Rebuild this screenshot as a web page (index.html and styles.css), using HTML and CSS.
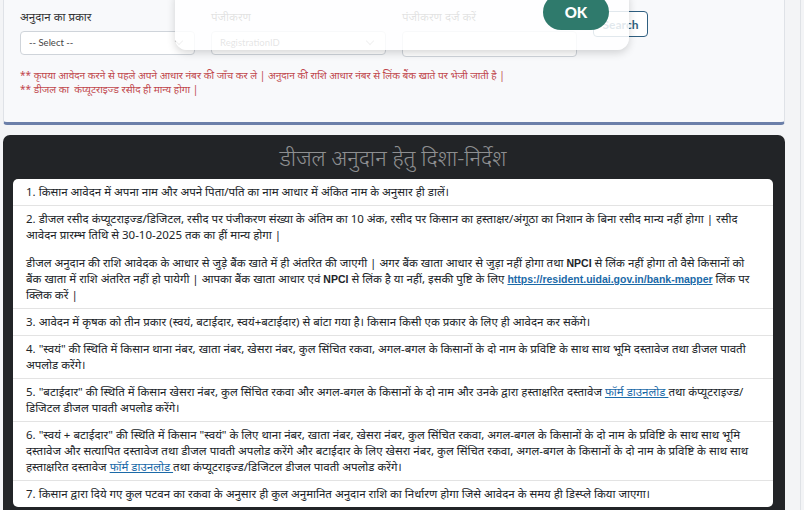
FILE: index.html
```html
<!DOCTYPE html>
<html>

<head>
    <meta charset="utf-8">
    <link rel="stylesheet" href="styles.css">
</head>

<body>
    <div class="page">
        <div class="search-card">
            <div class="form-row">
                <div class="field">
                    <label>अनुदान का प्रकार</label>
                    <div class="select-box">-- Select --<span class="chevron"></span></div>
                </div>
                <div class="field">
                    <label>पंजीकरण</label>
                    <div class="select-box">RegistrationID<span class="chevron"></span></div>
                </div>
                <div class="field">
                    <label>पंजीकरण दर्ज करें</label>
                    <div class="text-box"></div>
                </div>
                <button class="search-button">Search</button>
            </div>
            <div class="notes">
                <p>** कृपया आवेदन करने से पहले अपने आधार नंबर की जाँच कर ले | अनुदान की राशि आधार नंबर से लिंक बैंक खाते पर भेजी जाती है |</p>
                <p>** डीजल का &nbsp;कंप्यूटराइज्ड रसीद ही मान्य होगा |</p>
            </div>
            <!-- alert popup closing over the form -->
            <div class="alert-box">
                <button class="ok-button">OK</button>
            </div>
        </div>

        <div class="guide-panel">
            <h2>डीजल अनुदान हेतु दिशा-निर्देश</h2>
            <ul class="guide-list">
                <li>1. किसान आवेदन में अपना नाम और अपने पिता/पति का नाम आधार में अंकित नाम के अनुसार ही डालें।</li>
                <li>
                    <p>2. डीजल रसीद कंप्यूटराइज्ड/डिजिटल, रसीद पर पंजीकरण संख्या के अंतिम का 10 अंक, रसीद पर किसान का हस्ताक्षर/अंगूठा का निशान के बिना रसीद मान्य नहीं होगा | रसीद आवेदन प्रारम्भ तिथि से 30-10-2025 तक का हीं मान्य होगा |</p>
                    <p>डीजल अनुदान की राशि आवेदक के आधार से जुड़े बैंक खाते में ही अंतरित की जाएगी | अगर बैंक खाता आधार से जुड़ा नहीं होगा तथा <span class="latin">NPCI</span> से लिंक नहीं होगा तो वैसे किसानों को बैंक खाता में राशि अंतरित नहीं हो पायेगी | आपका बैंक खाता आधार एवं <span class="latin">NPCI</span> से लिंक है या नहीं, इसकी पुष्टि के लिए <a href="#" class="bold-link">https://resident.uidai.gov.in/bank-mapper</a> लिंक पर क्लिक करें |</p>
                </li>
                <li>3. आवेदन में कृषक को तीन प्रकार (स्वयं, बटाईदार, स्वयं+बटाईदार) से बांटा गया है। किसान किसी एक प्रकार के लिए ही आवेदन कर सकेंगे।</li>
                <li>4. "स्वयं" की स्थिति में किसान थाना नंबर, खाता नंबर, खेसरा नंबर, कुल सिंचित रकवा, अगल-बगल के किसानों के दो नाम के प्रविष्टि के साथ साथ भूमि दस्तावेज तथा डीजल पावती अपलोड करेंगे।</li>
                <li>5. "बटाईदार" की स्थिति में किसान खेसरा नंबर, कुल सिंचित रकवा और अगल-बगल के किसानों के दो नाम और उनके द्वारा हस्ताक्षरित दस्तावेज <a href="#">फॉर्म डाउनलोड&nbsp;</a>तथा कंप्यूटराइज्ड/डिजिटल डीजल पावती अपलोड करेंगे।</li>
                <li>6. "स्वयं + बटाईदार" की स्थिति में किसान "स्वयं" के लिए थाना नंबर, खाता नंबर, खेसरा नंबर, कुल सिंचित रकवा, अगल-बगल के किसानों के दो नाम के प्रविष्टि के साथ साथ भूमि दस्तावेज और सत्यापित दस्तावेज तथा डीजल पावती अपलोड करेंगे और बटाईदार के लिए खेसरा नंबर, कुल सिंचित रकवा, अगल-बगल के किसानों के दो नाम के प्रविष्टि के साथ साथ हस्ताक्षरित दस्तावेज <a href="#">फॉर्म डाउनलोड&nbsp;</a>तथा कंप्यूटराइज्ड/डिजिटल डीजल पावती अपलोड करेंगे।</li>
                <li>7. किसान द्वारा दिये गए कुल पटवन का रकवा के अनुसार ही कुल अनुमानित अनुदान राशि का निर्धारण होगा जिसे आवेदन के समय ही डिस्प्ले किया जाएगा।</li>
            </ul>
        </div>
    </div>
</body>
</html>
```

FILE: styles.css
```css
body {
    font-family: "Noto Sans", "Noto Sans Devanagari", "Lohit Devanagari", sans-serif;
    background-color: #f3f4f6;
    margin: 0;
    padding: 0;
    overflow: hidden;
}

.page {
    width: 797px;
    padding-left: 3px;
    border-right: 1px solid #dfe2e6;
    height: 510px;
}

.search-card {
    position: relative;
    width: 782px;
    background-color: #f8f9fb;
    border: 1px solid #dfe2e7;
    border-top: none;
    border-bottom: 3px solid #6b7fa9;
    border-radius: 0 0 4px 4px;
    height: 125px;
    box-sizing: border-box;
    padding: 9px 16px 0 16px;
}

.form-row {
    display: flex;
    align-items: flex-start;
    gap: 16px;
}

.field {
    width: 175px;
}

.field label {
    display: block;
    font-size: 11.5px;
    color: #333;
    height: 22px;
    line-height: 16px;
}

.select-box,
.text-box {
    position: relative;
    height: 22px;
    border: 1px solid #cfd4da;
    border-radius: 4px;
    background-color: white;
    font-family: Lato, "Open Sans", sans-serif;
    font-size: 9.5px;
    color: #444;
    line-height: 22px;
    padding-left: 8px;
}

.text-box {
    height: 24px;
}

.chevron {
    position: absolute;
    right: 12px;
    top: 6px;
    width: 5px;
    height: 5px;
    border-right: 1px solid #999;
    border-bottom: 1px solid #999;
    transform: rotate(45deg);
}

.search-button {
    margin-top: 2px;
    width: 55px;
    height: 26px;
    border: 1px solid #2f5f80;
    border-radius: 4px;
    background-color: white;
    color: #2f5f80;
    font-family: Lato, "Open Sans", sans-serif;
    font-weight: bold;
    font-size: 12px;
    padding: 0;
}

.notes {
    margin-top: 11px;
    color: #c0464b;
    font-size: 10.1px;
    line-height: 14px;
}

.notes p {
    margin: 0;
}

.alert-box {
    position: absolute;
    left: 171px;
    top: -12px;
    width: 454px;
    height: 62px;
    border-radius: 12px;
    background-color: rgba(255, 255, 255, 0.86);
    box-shadow: 0 3px 9px rgba(0, 0, 0, 0.16);
}

.ok-button {
    position: absolute;
    left: 368px;
    top: 6px;
    width: 66px;
    height: 36px;
    border: none;
    border-radius: 18px;
    background-color: #2f7a6c;
    color: white;
    font-family: Lato, "Open Sans", sans-serif;
    font-weight: 900;
    font-size: 15px;
}

.guide-panel {
    width: 760px;
    margin-top: 10px;
    background-color: #222427;
    border-radius: 7px 7px 0 0;
    padding: 0 12px 10px 10px;
    height: 400px;
}

.guide-panel h2 {
    margin: 0;
    height: 44px;
    line-height: 44px;
    text-align: center;
    font-weight: 300;
    font-size: 22px;
    color: #8e8f91;
}

.guide-list {
    list-style: none;
    margin: 0;
    padding: 0;
    background-color: white;
    border-radius: 5px;
}

.guide-list li {
    padding: 5px 13px;
    border-bottom: 1px solid #e3e3e3;
    font-size: 11.5px;
    line-height: 16px;
    color: #212529;
}

.guide-list li:last-child {
    border-bottom: none;
}

.guide-list li p {
    margin: 0;
}

.guide-list li p + p {
    margin-top: 12px;
}

.guide-list a {
    display: inline-block;
    line-height: 16px;
    color: #1b6aa8;
}

.latin {
    font-family: "Liberation Sans", Arial, sans-serif;
    font-weight: bold;
    font-size: 10.5px;
}

.bold-link {
    font-family: "Liberation Sans", Arial, sans-serif;
    font-weight: bold;
    font-size: 10.5px;
}
```
